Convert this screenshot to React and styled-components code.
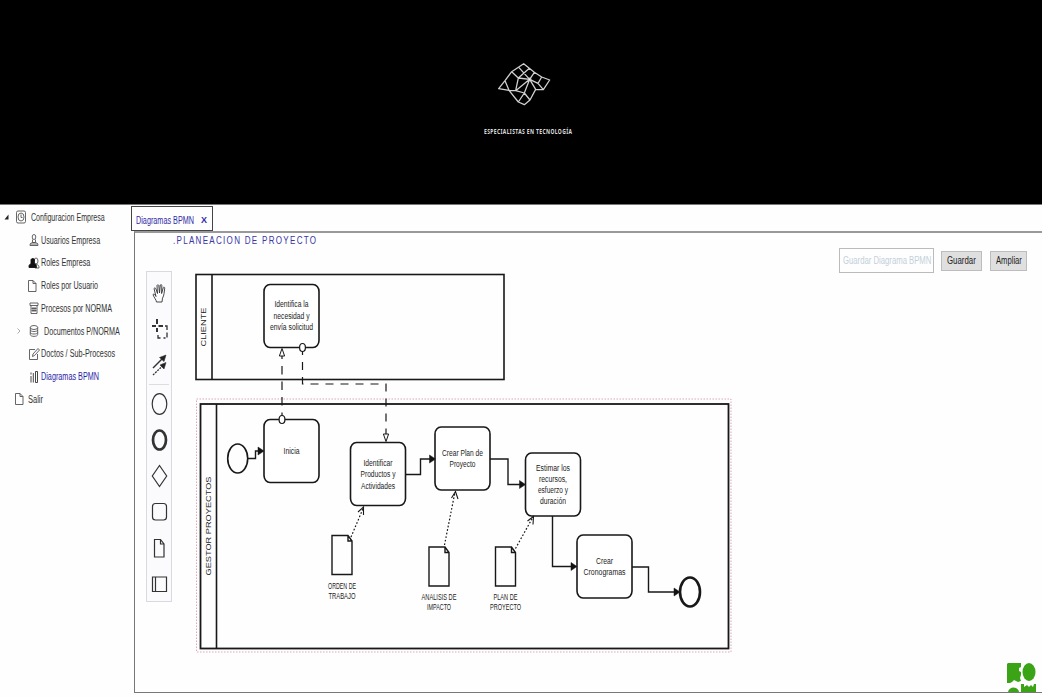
import React, { useLayoutEffect, useRef, useState } from 'react';
import styled, { createGlobalStyle } from 'styled-components';

const Global = createGlobalStyle`
  * { box-sizing: border-box; }
  body { margin: 0; background: #fefefe; overflow: hidden; font-family: "Liberation Sans", Arial, sans-serif; }
`;

const Page = styled.div`
  height: 697px;
  display: flex;
  flex-direction: column;
`;
const Header = styled.header`
  height: 205px;
  flex: none;
  background: #000;
  border-bottom: 1px solid #777;
  display: flex;
  flex-direction: column;
  align-items: center;
  padding: 62px 0 0 13px;
`;
const Logo = styled.svg`
  width: 54px;
  height: 46px;
  margin-right: 8px;
  fill: none;
  stroke: #d0d0d0;
  stroke-width: 3.8;
  stroke-linejoin: round;
`;
const Slogan = styled.div`
  margin-top: 18px;
  height: 12px;
  font: bold 6.5px/12px "Noto Sans", sans-serif;
  letter-spacing: 0.5px;
  color: #ddd;
`;
const Body = styled.div`
  flex: 1;
  display: flex;
  min-height: 0;
`;
const Sidebar = styled.nav`
  width: 131px;
  flex: none;
  padding-top: 1px;
`;
const Item = styled.div`
  height: 22.75px;
  display: flex;
  align-items: center;
  padding-left: ${(p) => p.$pad}px;
  font-size: 10px;
  color: ${(p) => (p.$active ? '#2a23a8' : '#333')};
`;
const ItemIcon = styled.svg`
  width: 12px;
  height: 14px;
  flex: none;
  margin-right: ${(p) => p.$gap}px;
  fill: none;
  stroke: #555;
`;
const Twisty = styled.svg`
  width: 6px;
  height: 8px;
  flex: none;
  margin-right: 6px;
`;
const Main = styled.main`
  flex: 1;
  display: flex;
  flex-direction: column;
`;
const Tab = styled.div`
  width: 82px;
  height: 25px;
  margin-top: 1px;
  border: 1px solid #444;
  display: flex;
  align-items: center;
  gap: 7px;
  padding: 3px 0 0 4px;
  font-size: 10px;
  color: #3029a8;
`;
const Close = styled.span`
  font-size: 9px;
  font-weight: bold;
`;
const Panel = styled.section`
  margin-left: 3px;
  height: 462px;
  border: 1px solid #777;
  border-right: 0;
  border-width: 2px 0 1px 1px;
  border-top-color: #999;
  display: flex;
  flex-direction: column;
  position: relative;
`;
const PanelHead = styled.div`
  height: 38px;
  display: flex;
  justify-content: space-between;
  padding-right: 15px;
`;
const Title = styled.h1`
  margin: 1px 0 0 38px;
  font-size: 10px;
  line-height: 13px;
  font-weight: normal;
  letter-spacing: 1.6px;
  color: #3b36a4;
`;
const Actions = styled.div`
  display: flex;
  align-items: center;
  margin-top: 15px;
  height: 25px;
`;
const NameBox = styled.div`
  width: 95px;
  height: 25px;
  border: 1px solid #bbb;
  display: flex;
  align-items: center;
  padding-left: 3px;
  margin-right: 7px;
  font-size: 10px;
  color: #c3d0da;
`;
const Button = styled.button`
  width: ${(p) => p.$w}px;
  height: 20px;
  padding: 0;
  margin: 0 ${(p) => p.$mr || 0}px 0 0;
  border: 1px solid #bdbdbd;
  background: #dfdfe0;
  display: flex;
  align-items: center;
  justify-content: center;
  font: 10px "Liberation Sans", Arial, sans-serif;
  color: #222;
`;
const Workspace = styled.div`
  display: flex;
  padding-left: 11px;
`;
const Palette = styled.div`
  width: 26px;
  height: 331px;
  flex: none;
  margin-right: 14px;
  padding: 3px 0 0 1px;
  border: 1px solid #d9d9df;
  background: #fbfafd;
`;
const Tool = styled.svg`
  display: block;
  width: 23px;
  height: 36px;
  fill: none;
  stroke: #333;
`;
const Divider = styled.div`
  height: 1px;
  margin: 1px 2px 1px 1px;
  background: #ddd;
`;
const Diagram = styled.svg`
  display: block;
  width: 555px;
  height: 390px;
  fill: none;
  stroke: #181818;
  stroke-width: 1.6;
  text {
    stroke: none;
    fill: #222;
    font-family: "Liberation Sans", Arial, sans-serif;
    text-anchor: middle;
  }
`;
const Brand = styled.svg`
  position: absolute;
  right: 6px;
  bottom: 0;
  width: 29px;
  height: 29px;
`;
const FitBox = styled.span`
  display: block;
  flex: none;
  width: ${(p) => p.$w}px;
  white-space: nowrap;
`;
const FitInner = styled.span`
  display: inline-block;
  transform-origin: 0 50%;
`;

function Fit({ w, children }) {
  const ref = useRef(null);
  const [scale, setScale] = useState(1);
  useLayoutEffect(() => {
    setScale(w / ref.current.offsetWidth);
  }, [w]);
  return (
    <FitBox $w={w}>
      <FitInner ref={ref} style={{ transform: `scaleX(${scale})` }}>{children}</FitInner>
    </FitBox>
  );
}

const icons = {
  clock: <g><rect x="1.5" y="1" width="9" height="12" rx="1.5" /><ellipse cx="6" cy="7" rx="3" ry="4" /><path d="M6 4.500V7.500h1.500" /></g>,
  user: <g><ellipse cx="6" cy="4" rx="1.800" ry="2.500" /><path d="M4.500 6.500v3h3v-3M2 12.500c0-3 2-2.500 2.500-3h3c.5.500 2.500 0 2.500 3zM2 11h8" /></g>,
  users: <g><ellipse cx="8" cy="5" rx="2" ry="3" /><path d="M8 8c2 1 3 1 3 4H7" /><path fill="#111" stroke="#111" d="M3 4c0-2 3.500-2 3.500 0 0 2-.5 3 .5 4 1.500.500 1.500 2 1.500 3.500H1C1 9 1 8.500 3 8z" /></g>,
  page: <path d="M2.500 1.500h4.500l3 3v8h-7.500zM7 1.500v3h3" />,
  bin: <path d="M2 2h8v2.500H2zM3 4.500v8h6v-8M5 6v5M7 6v5M3.500 7.500h5M3.500 9.500h5" />,
  db: <g><ellipse cx="6" cy="3.500" rx="3.700" ry="2" /><path d="M2.300 3.500v7c0 2.500 7.400 2.500 7.400 0v-7M2.300 6c0 2 7.400 2 7.400 0M2.300 8.500c0 2 7.400 2 7.400 0" /></g>,
  edit: <path d="M7 2.500H1.500v10h8V7M4.500 9.500l.5-2.500 5-5.500 1.500 1.500-5 5.500z" />,
  bars: <path d="M3 2.500v2M3 6v6.500M5.300 3v9.500M7.500 1.500h2v11h-2z" stroke="#333" />,
};

const menu = [
  { text: 'Configuracion Empresa', w: 74, icon: 'clock', pad: 3, gap: 4, open: true },
  { text: 'Usuarios Empresa', w: 59, icon: 'user', pad: 28, gap: 1 },
  { text: 'Roles Empresa', w: 49, icon: 'users', pad: 28, gap: 1 },
  { text: 'Roles por Usuario', w: 57, icon: 'page', pad: 26, gap: 3 },
  { text: 'Procesos por NORMA', w: 71, icon: 'bin', pad: 28, gap: 1 },
  { text: 'Documentos P/NORMA', w: 76, icon: 'db', pad: 16, gap: 4, closed: true },
  { text: 'Doctos / Sub-Procesos', w: 74, icon: 'edit', pad: 28, gap: 1 },
  { text: 'Diagramas BPMN', w: 58, icon: 'bars', pad: 28, gap: 1, active: true },
  { text: 'Salir', w: 15, icon: 'page', pad: 13, gap: 3 },
];

const toolsTop = [
  <path d="M8.500 27c0-2-3-5-3.500-7.500 1-1 2 0 3 2L6 13.500c.8-1 1.500-.5 2 .5l1.500 4.500L9 10.500c.5-1 1.500-1 1.800 0l.7 7.500.8-8c.5-.8 1.500-.5 1.500.5l-.2 8 1.700-6c.6-.8 1.500-.3 1.400.7-.5 4-.5 7-2.200 10l-.5 3.800z" strokeWidth=".9" />,
  <g><path d="M9 8v5M9 17v4M4 15h4M10.500 15H15" strokeWidth="2" /><path d="M17 15h2v4M19 21.500v5M17.500 27h-2M12.500 27H10v-3" strokeWidth="1.300" /></g>,
  <g><path d="M5 21L15 11" strokeWidth="1.500" /><path d="M5 28l10-9.500" strokeWidth="1.300" strokeDasharray="2 1" /><path d="M18 8l-2 6.500-4.500-4zM18 15.500l-2 6.500-4-4z" fill="#222" strokeWidth=".6" /></g>,
];
const toolsBottom = [
  <ellipse cx="11.500" cy="18" rx="7.300" ry="10.300" strokeWidth="1.200" />,
  <ellipse cx="11.500" cy="18" rx="6.500" ry="9.500" strokeWidth="2.700" />,
  <path d="M11.500 7.500L18.700 18l-7.200 10.500L4.300 18z" strokeWidth="1.200" />,
  <rect x="4.500" y="9.500" width="14" height="16.500" rx="3" strokeWidth="1.200" />,
  <path d="M6.500 9.500h6l3.500 4.500v13H6.500zM12.500 9.500v4.500H16" strokeWidth="1.200" />,
  <path d="M4.500 11h14v14.500h-14zM7.500 11v14.500" strokeWidth="1.200" />,
];

function Label({ x, y, lines, size = 8.3, step = 11.5 }) {
  return lines.map(([t, w], i) => (
    <text key={t} x={x} y={y + i * step} fontSize={size} textLength={w} lengthAdjust="spacingAndGlyphs">{t}</text>
  ));
}
function Task({ x, y, labelY, lines, step }) {
  return (
    <g>
      <rect x={x} y={y} width="55" height="63" rx="6" ry="7" fill="#fff" />
      <Label x={x + 27.5} y={labelY} lines={lines} step={step} />
    </g>
  );
}
function Doc({ x, y, labelY, lines }) {
  return (
    <g>
      <path d={`M${x} ${y}h16l4 5.500v33.500h-20zM${x + 16} ${y}v5.500h4`} strokeWidth="1.4" />
      <Label x={x + 10} y={labelY} lines={lines} size={8.2} step={10.3} />
    </g>
  );
}
function Arrow({ x, y }) {
  return <path d={`M${x} ${y}l-6-4v8z`} fill="#111" strokeWidth=".5" />;
}

export default function App() {
  return (
    <Page>
      <Global />
      <Header>
        <Logo viewBox="80 36 162 138">
          <path d="M160 41L124 65 104 92 85 116 116 121 144 156 162 164 179 150 196 118 219 119 238 90 214 81 192 67zM146 53l32 35M124 65l20 19 34-30M144 84l34 4 14-21M144 84l-8 38 42-34-16 41-26-7-20-1-12-29M178 88l18 30M178 88l25 12 11-19M203 100l16 19M162 129l-18 27M162 129l17 21" />
          <circle cx="178" cy="88" r="3.5" fill="#fff" />
        </Logo>
        <Slogan><Fit w={88}>ESPECIALISTAS EN TECNOLOGÍA</Fit></Slogan>
      </Header>
      <Body>
        <Sidebar>
          {menu.map((m) => (
            <Item key={m.text} $pad={m.pad} $active={m.active}>
              {m.open && <Twisty><path d="M1.500 6.500h4v-5z" fill="#222" /></Twisty>}
              {m.closed && <Twisty><path d="M1.500 1.500l2.500 2.500-2.500 2.500" fill="none" stroke="#aaa" /></Twisty>}
              <ItemIcon $gap={m.gap} viewBox="0 0 12 14" strokeWidth=".9">{icons[m.icon]}</ItemIcon>
              <Fit w={m.w}>{m.text}</Fit>
            </Item>
          ))}
        </Sidebar>
        <Main>
          <Tab><Fit w={58}>Diagramas BPMN</Fit><Close>X</Close></Tab>
          <Panel>
            <PanelHead>
              <Title><Fit w={144}>.PLANEACION DE PROYECTO</Fit></Title>
              <Actions>
                <NameBox><Fit w={88}>Guardar Diagrama BPMN</Fit></NameBox>
                <Button $w={41} $mr={8}><Fit w={29}>Guardar</Fit></Button>
                <Button $w={37}><Fit w={26}>Ampliar</Fit></Button>
              </Actions>
            </PanelHead>
            <Workspace>
              <Palette>
                {toolsTop.map((t, i) => <Tool key={i} viewBox="0 0 23 36">{t}</Tool>)}
                <Divider />
                {toolsBottom.map((t, i) => <Tool key={i} viewBox="0 0 23 36">{t}</Tool>)}
              </Palette>
              <Diagram viewBox="186 271 555 390">
                <rect x="196" y="274.5" width="308" height="105" />
                <path d="M212 274.500v105" />
                <text transform="translate(206 327) rotate(-90)" fontSize="7.5" textLength="39" lengthAdjust="spacingAndGlyphs">CLIENTE</text>
                <rect x="196.5" y="399" width="534.5" height="253" stroke="#d9a9b4" strokeWidth="1" strokeDasharray="1.5 1.5" />
                <rect x="200.5" y="404" width="528" height="244.5" strokeWidth="1.8" />
                <path d="M216.500 404v244.500" />
                <text transform="translate(210.5 526) rotate(-90)" fontSize="7.5" textLength="99" lengthAdjust="spacingAndGlyphs">GESTOR PROYECTOS</text>

                <Task x={264} y={284.5} labelY={307} lines={[['Identifica la', 34], ['necesidad y', 36], ['envía solicitud', 43]]} />
                <Task x={264} y={419.5} labelY={453.5} lines={[['Inicia', 16]]} />
                <Task x={350.5} y={442.5} labelY={465.5} lines={[['Identificar', 29], ['Productos y', 35], ['Actividades', 34]]} />
                <Task x={435} y={427} labelY={455.5} lines={[['Crear Plan de', 41], ['Proyecto', 26]]} />
                <Task x={525.5} y={453} labelY={470.5} step={11.2} lines={[['Estimar los', 34], ['recursos,', 28], ['esfuerzo y', 30], ['duración', 26]]} />
                <Task x={577} y={535} labelY={563.5} lines={[['Crear', 17], ['Cronogramas', 42]]} />

                <path d="M247.500 458.500h8V451h4M405.500 474.500h15V459h10M490 459h18v25.500h12M552.500 516v50.500h20M632 567h16.500v25h26" strokeWidth="1.4" />
                <Arrow x={264} y={451} />
                <Arrow x={435.5} y={459} />
                <Arrow x={525.5} y={484.5} />
                <Arrow x={577} y={566.5} />
                <Arrow x={680} y={592} />
                <ellipse cx="237.7" cy="458.5" rx="10" ry="14.5" />
                <ellipse cx="690" cy="592" rx="10" ry="14.5" strokeWidth="2.6" fill="#fff" />

                <path d="M282 416V356" strokeDasharray="8.5 7" strokeDashoffset="5" strokeWidth="1.2" />
                <path d="M302.500 351v33H386V434" strokeDasharray="8 7" strokeDashoffset="4" strokeWidth="1.2" />
                <path d="M282 348.500l-2.600 7.500h5.200zM386 441.500l-2.600-7.500h5.200z" fill="#fff" strokeWidth="1" />
                <ellipse cx="282" cy="419.5" rx="2.9" ry="4" fill="#fff" strokeWidth="1.2" />
                <ellipse cx="302.5" cy="347.5" rx="2.9" ry="4" fill="#fff" strokeWidth="1.2" />

                <path d="M351 537l12.500-29.500M444.500 545L455 492M515.500 548.500L533 517" strokeDasharray="1.7 1.9" strokeWidth="1.2" />
                <path d="M358 512l5.500-5 0 8M451.500 498l4-6.500 2.500 7.500M527.500 521l6-4.500-.5 8" strokeWidth="1.1" />
                <Doc x={332} y={535.5} labelY={588.5} lines={[['ORDEN DE', 28], ['TRABAJO', 27]]} />
                <Doc x={429} y={547} labelY={599.5} lines={[['ANALISIS DE', 35], ['IMPACTO', 24]]} />
                <Doc x={495.5} y={547} labelY={599.5} lines={[['PLAN DE', 24], ['PROYECTO', 31]]} />
              </Diagram>
            </Workspace>
            <Brand viewBox="0 0 29 29">
              <path fill="#3ba316" d="M1 0h13v4l-2 1v3l2 1v3l-1 3 1 3-3 1-2-1-2-1-2 2-2 1H0V1zM14 21h3v3l3-2 2 2 2-2 2 2 1-3h2v8H14z" />
              <ellipse cx="22" cy="9" rx="6.5" ry="9" fill="#3ba316" />
              <path fill="#3ba316" d="M1 29c1-6 10-6 11 0z" />
            </Brand>
          </Panel>
        </Main>
      </Body>
    </Page>
  );
}
